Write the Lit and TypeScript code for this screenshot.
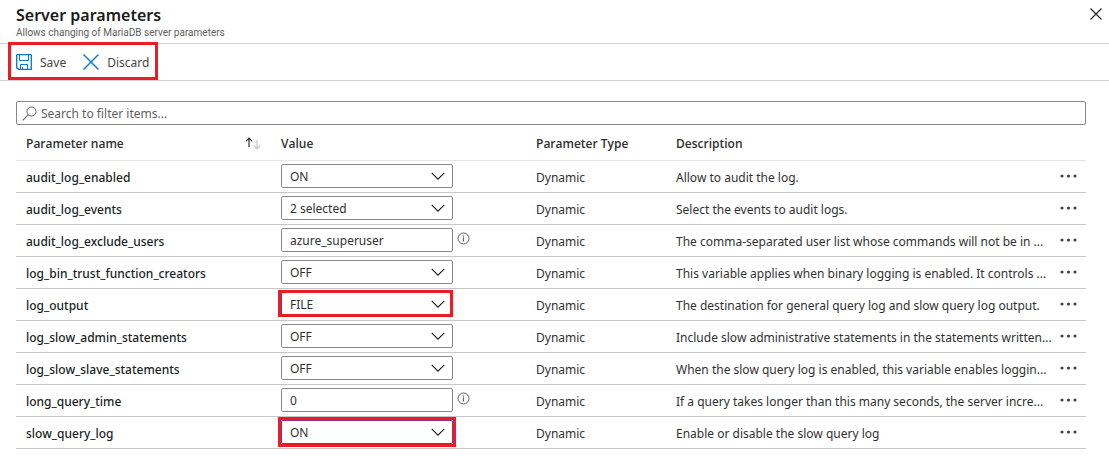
import { LitElement, html, css, svg, nothing } from "lit";
import { customElement, property, state } from "lit/decorators.js";
import { classMap } from "lit/directives/class-map.js";

interface Parameter {
  name: string;
  kind: "select" | "text";
  value: string;
  options?: string[];
  description: string;
  mark?: "edge" | "around";
}

const onOff = ["ON", "OFF"];

const parameters: Parameter[] = [
  { name: "audit_log_enabled", kind: "select", value: "ON", options: onOff, description: "Allow to audit the log." },
  { name: "audit_log_events", kind: "select", value: "2 selected", options: ["2 selected"], description: "Select the events to audit logs." },
  { name: "audit_log_exclude_users", kind: "text", value: "azure_superuser", description: "The comma-separated user list whose commands will not be in ..." },
  { name: "log_bin_trust_function_creators", kind: "select", value: "OFF", options: onOff, description: "This variable applies when binary logging is enabled. It controls ..." },
  { name: "log_output", kind: "select", value: "FILE", options: ["FILE", "NONE"], description: "The destination for general query log and slow query log output.", mark: "edge" },
  { name: "log_slow_admin_statements", kind: "select", value: "OFF", options: onOff, description: "Include slow administrative statements in the statements written..." },
  { name: "log_slow_slave_statements", kind: "select", value: "OFF", options: onOff, description: "When the slow query log is enabled, this variable enables loggin..." },
  { name: "long_query_time", kind: "text", value: "0", description: "If a query takes longer than this many seconds, the server incre..." },
  { name: "slow_query_log", kind: "select", value: "ON", options: onOff, description: "Enable or disable the slow query log", mark: "around" },
];

const shared = css`
  * {
    box-sizing: border-box;
  }
  button,
  input,
  select {
    font: inherit;
    color: inherit;
    margin: 0;
  }
  button {
    padding: 0;
    border: 0;
    background: none;
    cursor: pointer;
  }
  svg {
    display: block;
    flex: none;
  }
`;

@customElement("value-field")
class ValueField extends LitElement {
  @property({ attribute: false }) parameter!: Parameter;

  static styles = [
    shared,
    css`
      :host {
        display: flex;
        gap: 4px;
      }
      .field {
        position: relative;
        display: grid;
        width: 172px;
      }
      .control {
        grid-area: 1 / 1;
        width: 100%;
        height: 24px;
        padding: 1px 8px 0;
        border: 1px solid #8a8886;
        border-radius: 2px;
        background: #fff;
        color: #323130;
        appearance: none;
        outline: 0;
      }
      .changed {
        border-color: #8a2da5;
      }
      .chevron {
        grid-area: 1 / 1;
        place-self: center end;
        margin-right: 8px;
        pointer-events: none;
      }
      .edge::after,
      .around::after {
        content: "";
        position: absolute;
        inset: -3px;
        border: 3px solid #ed1c24;
        pointer-events: none;
      }
      .edge::after {
        inset: -2px 0 -1px -3px;
      }
      .info {
        align-self: flex-start;
        padding-top: 4px;
      }
    `,
  ];

  render() {
    const { name, kind, value, options = [], mark } = this.parameter;
    const control = classMap({ control: true, changed: !!mark });
    return html`
      <div class=${classMap({ field: true, edge: mark === "edge", around: mark === "around" })}>
        ${kind === "select"
          ? html`<select class=${control} aria-label=${name}>
                ${options.map((o) => html`<option ?selected=${o === value}>${o}</option>`)}
              </select>
              <svg class="chevron" width="14" height="8" viewBox="0 0 14 8" aria-hidden="true">
                <path d="M.7.9 7 7.1 13.3.9" fill="none" stroke="#201f1e" stroke-width="1.2" />
              </svg>`
          : html`<input class=${control} type="text" aria-label=${name} .value=${value} />`}
      </div>
      ${kind === "text"
        ? html`<button class="info" aria-label="About ${name}">
            <svg width="13" height="13" viewBox="0 0 13 13">
              <circle cx="6.5" cy="6.5" r="5.5" fill="none" stroke="#605e5c" />
              <path d="M6.5 5.5v4M6.5 3.5v1.2" stroke="#605e5c" stroke-width="1.1" />
            </svg>
          </button>`
        : nothing}
    `;
  }
}

@customElement("app-root")
class AppRoot extends LitElement {
  @state() private filter = "";

  static styles = [
    shared,
    css`
      :host {
        display: block;
        background: #fff;
        color: #323130;
        font: 12px/16px "Noto Sans", "Open Sans", sans-serif;
      }
      .header {
        display: flex;
        justify-content: space-between;
        align-items: flex-start;
        padding: 4px 3px 4px 16px;
        border-bottom: 1px solid #d2d0ce;
      }
      .title {
        margin: 0;
        font-size: 16px;
        line-height: 22px;
        font-weight: 600;
        color: #1b1a19;
      }
      .subtitle {
        margin: 0;
        font-family: Roboto, "Noto Sans", sans-serif;
        font-size: 10px;
        line-height: 13px;
        color: #605e5c;
      }
      .close {
        padding: 4px;
      }
      .toolbar {
        display: flex;
        padding: 0 8px;
        border-bottom: 1px solid #d2d0ce;
      }
      .commands {
        position: relative;
        display: flex;
        gap: 17px;
        padding: 10px 9px 8px 8px;
      }
      .commands::after {
        content: "";
        position: absolute;
        inset: -2px 0 0;
        border: 3px solid #ed1c24;
        pointer-events: none;
      }
      .command {
        display: flex;
        align-items: flex-start;
        gap: 8px;
        line-height: 18px;
        color: #484644;
      }
      .content {
        padding: 20px 23px 0 16px;
      }
      .search {
        display: flex;
        align-items: center;
        gap: 4px;
        height: 24px;
        padding: 0 5px;
        border: 1px solid #8a8886;
        border-radius: 2px;
      }
      .query {
        flex: 1;
        min-width: 0;
        padding: 2px 0 0;
        border: 0;
        outline: 0;
        background: none;
      }
      .query::placeholder {
        color: #605e5c;
        opacity: 1;
      }
      .grid {
        width: 100%;
        table-layout: fixed;
        border-collapse: separate;
        border-spacing: 0;
      }
      .name,
      .value {
        width: 255px;
      }
      .type {
        width: 140px;
      }
      .actions {
        width: 32px;
      }
      .head {
        height: 36px;
        padding: 2px 10px 0;
        border-bottom: 1px solid #e8e6e4;
        text-align: left;
        font-family: "Open Sans", "Noto Sans", sans-serif;
        font-weight: 600;
        color: #323130;
      }
      .cell {
        height: 32px;
        padding: 2px 10px 0;
        border-bottom: 1px solid #c8c6c4;
        text-align: left;
        font-weight: 400;
        white-space: nowrap;
      }
      .key {
        font-weight: 500;
        color: #201f1e;
      }
      .entry {
        padding-top: 3px;
        vertical-align: top;
      }
      .text {
        padding-right: 0;
        overflow: hidden;
        text-overflow: ellipsis;
      }
      .end {
        padding: 0;
        vertical-align: top;
      }
      .sort {
        display: flex;
        justify-content: space-between;
        align-items: center;
        width: 100%;
        font-weight: inherit;
      }
      .more {
        display: block;
        padding: 13px 4px 8px 6px;
      }
    `,
  ];

  private onFilter(e: InputEvent) {
    this.filter = (e.target as HTMLInputElement).value;
  }

  private icon(width: number, height: number, body: unknown) {
    return html`<svg width=${width} height=${height} viewBox="0 0 ${width} ${height}" fill="none" aria-hidden="true">${body}</svg>`;
  }

  render() {
    const rows = parameters.filter((p) => p.name.includes(this.filter.trim()));
    return html`
      <header class="header">
        <div>
          <h1 class="title">Server parameters</h1>
          <p class="subtitle">Allows changing of MariaDB server parameters</p>
        </div>
        <button class="close" aria-label="Close">
          ${this.icon(12, 12, svg`<path d="M.5.5l11 11M11.5.5l-11 11" stroke="#201f1e" stroke-width="1.1"/>`)}
        </button>
      </header>
      <div class="toolbar">
        <div class="commands">
          <button class="command">
            ${this.icon(16, 16, svg`
              <path d="M1.2.7h13.6q.5 0 .5.5v14.1H2.6L.7 13.6V1.2q0-.5.5-.5z" stroke="#0078d4" stroke-width="1.3"/>
              <path d="M3.5 1v5.5h9V1M4.5 15v-4.5h7V15M6.5 13v2" stroke="#0078d4"/>`)}
            Save
          </button>
          <button class="command">
            ${this.icon(16, 16, svg`<path d="M.5.5l15 15M15.5.5l-15 15" stroke="#0078d4" stroke-width="1.4"/>`)}
            Discard
          </button>
        </div>
      </div>
      <main class="content">
        <label class="search">
          ${this.icon(15, 15, svg`
            <circle cx="9.5" cy="5.5" r="4.6" stroke="#605e5c"/>
            <path d="M6.2 8.8L.7 14.3" stroke="#605e5c" stroke-width="1.1"/>`)}
          <input class="query" type="text" aria-label="Search to filter items" placeholder="Search to filter items..." @input=${this.onFilter} />
        </label>
        <table class="grid">
          <thead>
            <tr>
              <th class="head name" scope="col">
                <button class="sort">
                  Parameter name
                  ${this.icon(16, 13, svg`
                    <path d="M4 10V1.2M.8 4.3L4 1.1l3.2 3.2" stroke="#323130" stroke-width="1.2"/>
                    <path d="M12 3v8.8M8.8 8.7L12 11.9l3.2-3.2" stroke="#c8c6c4" stroke-width="1.2"/>`)}
                </button>
              </th>
              <th class="head value" scope="col">Value</th>
              <th class="head type" scope="col">Parameter Type</th>
              <th class="head" scope="col">Description</th>
              <th class="head actions" scope="col" aria-label="Actions"></th>
            </tr>
          </thead>
          <tbody>
            ${rows.map(
              (p) => html`<tr>
                <th class="cell key" scope="row">${p.name}</th>
                <td class="cell entry"><value-field .parameter=${p}></value-field></td>
                <td class="cell">Dynamic</td>
                <td class="cell text">${p.description}</td>
                <td class="cell end">
                  <button class="more" aria-label="More actions for ${p.name}">
                    ${this.icon(17, 4, svg`<g fill="#484644"><circle cx="2" cy="2" r="1.6"/><circle cx="8.5" cy="2" r="1.6"/><circle cx="15" cy="2" r="1.6"/></g>`)}
                  </button>
                </td>
              </tr>`
            )}
          </tbody>
        </table>
      </main>
    `;
  }
}
